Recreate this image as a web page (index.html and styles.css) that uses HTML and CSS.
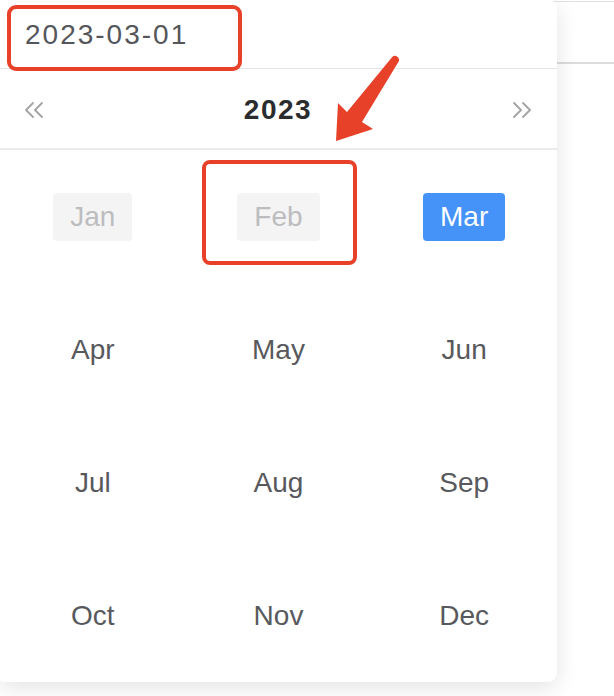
FILE: index.html
```html
<!DOCTYPE html>
<html lang="en">
<head>
<meta charset="utf-8">
<title>Month picker</title>
<link rel="stylesheet" href="styles.css">
</head>
<body>
<div class="page">
  <div class="underlay"></div>

  <div class="panel">
    <div class="picker-input">2023-03-01</div>
    <div class="picker-header">
      <svg class="nav" viewBox="0 0 20 16" width="20" height="16" aria-hidden="true">
        <polyline points="9,1 2,8 9,15"/>
        <polyline points="18,1 11,8 18,15"/>
      </svg>
      <span class="year">2023</span>
      <svg class="nav" viewBox="0 0 20 16" width="20" height="16" aria-hidden="true">
        <polyline points="2,1 9,8 2,15"/>
        <polyline points="11,1 18,8 11,15"/>
      </svg>
    </div>
    <div class="months">
      <div class="cell"><span class="m disabled">Jan</span></div>
      <div class="cell"><span class="m disabled">Feb</span></div>
      <div class="cell"><span class="m current">Mar</span></div>
      <div class="cell"><span class="m">Apr</span></div>
      <div class="cell"><span class="m">May</span></div>
      <div class="cell"><span class="m">Jun</span></div>
      <div class="cell"><span class="m">Jul</span></div>
      <div class="cell"><span class="m">Aug</span></div>
      <div class="cell"><span class="m">Sep</span></div>
      <div class="cell"><span class="m">Oct</span></div>
      <div class="cell"><span class="m">Nov</span></div>
      <div class="cell"><span class="m">Dec</span></div>
    </div>
  </div>

  <div class="mark mark-input"></div>
  <div class="mark mark-feb"></div>
  <svg class="arrow" viewBox="0 0 614 696" width="614" height="696" aria-hidden="true">
    <path d="M392,57.3 L347,112 L338,103 L336,141 L373,129 L362,122 L397.9,62.7 A4,4 0 0 0 392,57.3 Z"/>
  </svg>
</div>
</body>
</html>
```

FILE: styles.css
```css
html, body {
  margin: 0;
  padding: 0;
  background: #ffffff;
}

body {
  font-family: "Liberation Sans", Arial, Helvetica, sans-serif;
}

.page {
  position: relative;
  width: 614px;
  height: 696px;
  overflow: hidden;
  background: #ffffff;
}

.underlay {
  margin-top: 1px;
  height: 60px;
  border-top: 1px solid #e3e3e3;
  border-bottom: 2px solid #dcdcdc;
}

.panel {
  position: absolute;
  left: 0;
  top: 0;
  width: 557px;
  height: 682px;
  background: #ffffff;
  border-radius: 0 8px 9px 4px;
  box-shadow: 0 6px 22px rgba(0, 0, 0, 0.11);
  display: flex;
  flex-direction: column;
}

.picker-input {
  height: 69px;
  border-bottom: 1px solid #e4e4e4;
  box-sizing: border-box;
  display: flex;
  align-items: center;
  padding-left: 25px;
  padding-top: 2px;
  font-size: 28px;
  letter-spacing: 2px;
  color: #55565a;
}

.picker-header {
  height: 81px;
  border-bottom: 2px solid #ebebeb;
  display: flex;
  align-items: center;
  justify-content: space-between;
  padding: 2px 25px 0 24px;
  box-sizing: border-box;
}

.nav {
  fill: none;
  stroke: #a3a3a3;
  stroke-width: 1.8;
  stroke-linecap: round;
  stroke-linejoin: round;
}

.year {
  font-size: 28px;
  font-weight: bold;
  letter-spacing: 1.5px;
  color: #2b2c2e;
}

.months {
  flex: 1;
  display: grid;
  grid-template-columns: repeat(3, 1fr);
  grid-template-rows: repeat(4, 1fr);
}

.cell {
  display: flex;
  align-items: center;
  justify-content: center;
}

.m {
  display: inline-flex;
  align-items: center;
  justify-content: center;
  height: 48px;
  padding: 0 17px;
  border-radius: 4px;
  font-size: 28px;
  color: #58595d;
}

.m.disabled {
  background: #f4f4f5;
  color: #bdbdbf;
}

.m.current {
  background: #4592f8;
  color: #ffffff;
}

.mark {
  position: absolute;
  border: 4.5px solid #e8412a;
  box-sizing: border-box;
}

.mark-input {
  left: 7px;
  top: 5px;
  width: 235px;
  height: 66px;
  border-radius: 9px;
}

.mark-feb {
  left: 202px;
  top: 160px;
  width: 155px;
  height: 105px;
  border-radius: 8px;
}

.arrow {
  position: absolute;
  left: 0;
  top: 0;
  fill: #e8412a;
}
```
